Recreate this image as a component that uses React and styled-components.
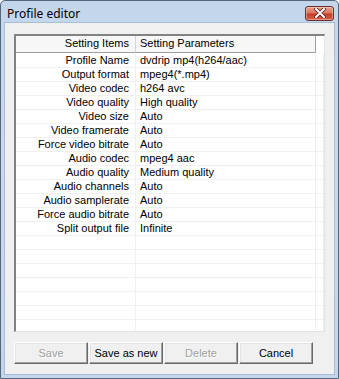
import React from "react";
import styled, { createGlobalStyle } from "styled-components";

const GlobalStyle = createGlobalStyle`
  html, body {
    margin: 0;
    padding: 0;
    background: #ffffff;
  }
  * {
    box-sizing: border-box;
  }
`;

const Window = styled.div`
  width: 339px;
  height: 379px;
  display: flex;
  flex-direction: column;
  border: 1px solid #56677c;
  border-radius: 5px 5px 0 0;
  background: linear-gradient(to bottom, #c3d6ec 0%, #c9daee 40%, #c4d6eb 100%);
  padding: 0 3px 3px 3px;
  font-family: "Liberation Sans", Tahoma, sans-serif;
`;

const TitleBar = styled.div`
  height: 21px;
  display: flex;
  align-items: center;
  justify-content: space-between;
  padding: 0 1px 0 3px;
`;

const Title = styled.span`
  font-family: "Noto Sans", "Liberation Sans", sans-serif;
  font-size: 12px;
  color: #000;
  padding-top: 4px;
`;

const CloseButton = styled.div`
  width: 29px;
  height: 15px;
  margin-top: 3px;
  border: 1px solid #6d2e2c;
  border-radius: 3px;
  background: linear-gradient(to bottom, #e9a08c 0%, #d9765f 45%, #c23f27 55%, #d5634a 100%);
  display: flex;
  align-items: center;
  justify-content: center;
  box-shadow: inset 0 0 0 1px rgba(255, 255, 255, 0.35);
`;

const Body = styled.div`
  flex: 1;
  background: #f0f0f0;
  border: 1px solid #a8bdd6;
  padding: 11px 9px 10px 9px;
  display: flex;
  flex-direction: column;
  gap: 10px;
`;

const ListView = styled.div`
  height: 298px;
  border-top: 2px solid #828282;
  border-left: 2px solid #828282;
  border-right: 1px solid #e3e3e3;
  border-bottom: 1px solid #e3e3e3;
  background: #ffffff;
  overflow: hidden;
  font-size: 11px;
  color: #000;
`;

const Header = styled.div`
  display: grid;
  grid-template-columns: 120px 180px;
  height: 17px;
`;

const HeaderCell = styled.div`
  background: #f7f7f7;
  border-bottom: 1px solid #a0a0a0;
  border-right: 1px solid ${(p) => (p.$last ? "#a0a0a0" : "#d5d5d5")};
  text-align: ${(p) => (p.$align || "left")};
  padding: ${(p) => (p.$align === "right" ? "0 6px 0 0" : "0 0 0 4px")};
  line-height: 15px;
  white-space: nowrap;
`;

const Row = styled.div`
  display: grid;
  grid-template-columns: 120px 180px 1fr;
  height: 14px;
  margin-top: ${(p) => (p.$first ? "1px" : "0")};
`;

const Cell = styled.div`
  border-right: 1px solid #f0f0f0;
  border-bottom: 1px solid #f0f0f0;
  text-align: ${(p) => (p.$align || "left")};
  padding: ${(p) => (p.$align === "right" ? "0 6px 0 0" : "0 0 0 4px")};
  line-height: 13px;
  white-space: nowrap;
  overflow: hidden;
`;

const ButtonRow = styled.div`
  display: flex;
  gap: 1px;
`;

const Button = styled.button`
  width: 74px;
  height: 22px;
  padding: 0;
  font-family: "Liberation Sans", Tahoma, sans-serif;
  font-size: 11px;
  background: #f0f0f0;
  color: ${(p) => (p.disabled ? "#a0a0a0" : "#000")};
  text-shadow: ${(p) => (p.disabled ? "1px 1px 0 #ffffff" : "none")};
  border-style: solid;
  border-width: 1px;
  border-color: #ffffff #696969 #696969 #ffffff;
  box-shadow: inset -1px -1px 0 #a0a0a0, inset 1px 1px 0 #e3e3e3;
  outline: none;
  cursor: default;
`;

const settings = [
  ["Profile Name", "dvdrip mp4(h264/aac)"],
  ["Output format", "mpeg4(*.mp4)"],
  ["Video codec", "h264 avc"],
  ["Video quality", "High quality"],
  ["Video size", "Auto"],
  ["Video framerate", "Auto"],
  ["Force video bitrate", "Auto"],
  ["Audio codec", "mpeg4 aac"],
  ["Audio quality", "Medium quality"],
  ["Audio channels", "Auto"],
  ["Audio samplerate", "Auto"],
  ["Force audio bitrate", "Auto"],
  ["Split output file", "Infinite"],
];

const rows = [...settings];
while (rows.length < 21) rows.push(["", ""]);

const CloseIcon = () => (
  <svg width="12" height="10" viewBox="0 0 12 10">
    <path
      d="M2 1 L10 9 M10 1 L2 9"
      stroke="#5a1f1a"
      strokeWidth="3.6"
      strokeLinecap="square"
    />
    <path
      d="M2 1 L10 9 M10 1 L2 9"
      stroke="#ffffff"
      strokeWidth="2"
      strokeLinecap="square"
    />
  </svg>
);

export default function App() {
  return (
    <>
      <GlobalStyle />
      <Window>
        <TitleBar>
          <Title>Profile editor</Title>
          <CloseButton>
            <CloseIcon />
          </CloseButton>
        </TitleBar>
        <Body>
          <ListView>
            <Header>
              <HeaderCell $align="right">Setting Items</HeaderCell>
              <HeaderCell $last>Setting Parameters</HeaderCell>
            </Header>
            {rows.map(([key, value], i) => (
              <Row key={i} $first={i === 0}>
                <Cell $align="right">{key}</Cell>
                <Cell>{value}</Cell>
                <Cell />
              </Row>
            ))}
          </ListView>
          <ButtonRow>
            <Button disabled>Save</Button>
            <Button>Save as new</Button>
            <Button disabled>Delete</Button>
            <Button>Cancel</Button>
          </ButtonRow>
        </Body>
      </Window>
    </>
  );
}
